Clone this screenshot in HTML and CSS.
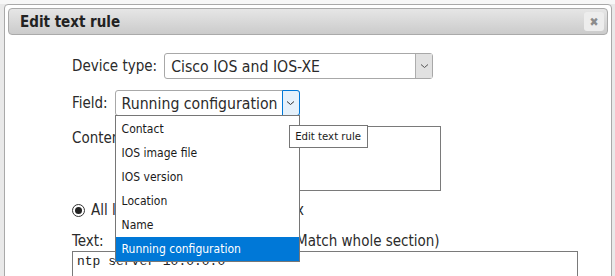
FILE: index.html
```html
<!DOCTYPE html>
<html lang="en">
<head>
    <meta charset="UTF-8">
    <title>Edit text rule</title>
    <link rel="stylesheet" href="styles.css">
</head>
<body>
    <div class="dialog">
        <div class="titlebar">
            <span class="title">Edit text rule</span>
            <span class="close-btn">&#10006;</span>
        </div>

        <div class="form">
            <div class="row row-device">
                <span class="label">Device type:</span>
                <div class="select select-device">
                    <span class="select-text">Cisco IOS and IOS-XE</span>
                    <span class="arrow"><svg width="9" height="6" viewBox="0 0 9 6"><path d="M1 1.5 L4.5 4.5 L8 1.5" fill="none" stroke="#555" stroke-width="1"/></svg></span>
                </div>
            </div>

            <div class="row row-field">
                <span class="label">Field:</span>
                <div class="select select-field focused">
                    <span class="select-text">Running configuration</span>
                    <span class="arrow"><svg width="9" height="6" viewBox="0 0 9 6"><path d="M1 1.5 L4.5 4.5 L8 1.5" fill="none" stroke="#333" stroke-width="1"/></svg></span>

                    <!-- open list of the field select -->
                    <ul class="dropdown">
                        <li>Contact</li>
                        <li>IOS image file</li>
                        <li>IOS version</li>
                        <li>Location</li>
                        <li>Name</li>
                        <li class="selected">Running configuration</li>
                    </ul>
                    <div class="tooltip">Edit text rule</div>
                </div>
            </div>

            <div class="row row-content">
                <span class="label">Content:</span>
                <div class="textbox textbox-small"></div>
            </div>

            <div class="row row-radio">
                <span class="radio checked"></span>
                <span class="radio-text">All lines</span>
                <span class="radio off"></span>
                <span class="radio-text">Regex</span>
            </div>

            <div class="row row-text">
                <span class="label">Text:</span>
                <span class="hint">(Regular expression. Match whole section)</span>
            </div>

            <div class="textbox textbox-big">ntp server 10.0.0.0</div>
        </div>
    </div>
</body>
</html>
```

FILE: styles.css
```css
/* page behind the dialog */
html, body {
    margin: 0;
    width: 615px;
    height: 276px;
    overflow: hidden;
}

body {
    background-color: #e9e9e9;
    background-image:
        linear-gradient(#f7f7f7, #f7f7f7);
    background-size: 100% 4px;
    background-repeat: no-repeat;
    font-family: "DejaVu Sans Condensed", "DejaVu Sans", sans-serif;
    color: #2b2b2b;
}

.dialog {
    margin: 4px 3px 0 4px;
    height: 280px;
    border: 1px solid #a9a9a9;
    border-radius: 4px;
    background: #fff;
    padding: 3px;
}

.titlebar {
    height: 25px;
    border: 1px solid #aaa;
    border-radius: 4px;
    background: linear-gradient(#e6e6e6, #cbcbcb);
    display: flex;
    align-items: center;
    justify-content: space-between;
    padding: 0 3px 0 11px;
}

.title {
    font-weight: bold;
    font-size: 15px;
    color: #222;
}

.close-btn {
    width: 20px;
    height: 19px;
    background: #ededed;
    border-radius: 3px;
    color: #8c8c8c;
    font-size: 12px;
    display: flex;
    align-items: center;
    justify-content: center;
}

.form {
    padding-left: 64px;
}

.row {
    display: flex;
    align-items: center;
    font-size: 15px;
}

.label {
    margin-right: 7px;
}

.row-device {
    margin-top: 18px;
}

.row-field {
    margin-top: 11px;
}

.row-content {
    margin-top: 10px;
    align-items: flex-start;
}

.row-content .label {
    margin-top: 3px;
}

.row-radio {
    margin-top: 10px;
    height: 18px;
}

.row-text {
    margin-top: 13px;
    height: 18px;
}

/* fake select boxes */
.select {
    position: relative;
    display: flex;
    align-items: center;
    justify-content: space-between;
    border: 1px solid #a8a8a8;
    border-radius: 3px;
    background: #fff;
    box-sizing: border-box;
}

.select-device {
    width: 269px;
    height: 26px;
}

.select-field {
    width: 185px;
    height: 26px;
}

.select-text {
    padding-left: 6px;
    font-size: 15.7px;
    white-space: nowrap;
}

.arrow {
    width: 16px;
    align-self: stretch;
    background: #e1e1e1;
    border-left: 1px solid #adadad;
    display: flex;
    align-items: center;
    justify-content: center;
}

.focused .arrow {
    background: #e5f1fb;
    border: 1px solid #0078d7;
    margin: -1px -1px -1px 0;
    border-radius: 0 3px 3px 0;
}

.dropdown {
    position: absolute;
    left: -1px;
    top: 24px;
    width: 183px;
    margin: 0;
    padding: 1px 0 0 0;
    list-style: none;
    background: #fff;
    border: 1px solid #767676;
    z-index: 2;
}

.dropdown li {
    height: 24px;
    line-height: 24px;
    padding-left: 6px;
    font-size: 12px;
    color: #1a1a1a;
}

.dropdown li.selected {
    background: #0078d7;
    color: #fff;
}

.tooltip {
    position: absolute;
    left: 173px;
    top: 34px;
    width: 77px;
    height: 21px;
    border: 1px solid #767676;
    background: #fff;
    font-size: 11.3px;
    line-height: 21px;
    text-align: center;
    color: #1a1a1a;
    z-index: 3;
}

.textbox {
    border: 1px solid #7a7a7a;
    background: #fff;
    box-sizing: border-box;
}

.textbox-small {
    width: 304px;
    height: 65px;
}

.textbox-big {
    margin-top: 1px;
    width: 506px;
    height: 60px;
    padding: 2px 4px;
    font-family: "Liberation Mono", monospace;
    font-size: 13px;
    color: #222;
}

/* radio buttons */
.radio {
    width: 11px;
    height: 11px;
    border: 1px solid #333;
    border-radius: 50%;
    position: relative;
    margin-right: 6px;
}

.radio.checked::after {
    content: "";
    position: absolute;
    left: 2px;
    top: 2px;
    width: 7px;
    height: 7px;
    border-radius: 50%;
    background: #222;
}

.radio.off {
    margin-left: 100px;
}

.hint {
    margin-left: 43px;
    white-space: nowrap;
}
```
